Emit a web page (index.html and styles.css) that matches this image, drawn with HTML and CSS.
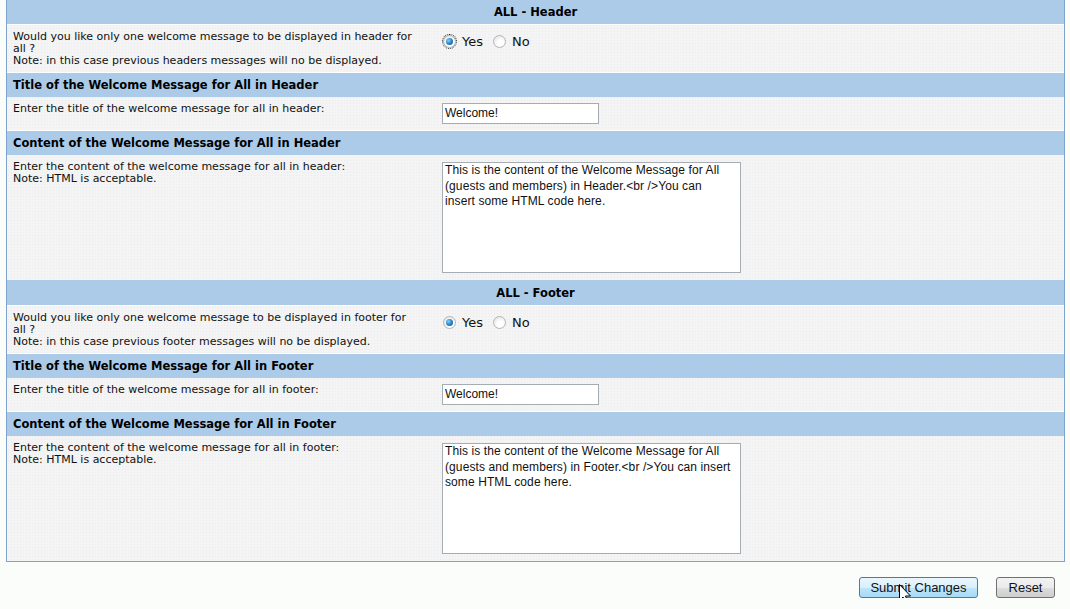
FILE: index.html
```html
<!DOCTYPE html>
<html lang="en">
<head>
    <meta charset="UTF-8">
    <title>Welcome Messages</title>
    <link rel="stylesheet" href="styles.css">
</head>
<body>
    <form class="panel">
        <div class="cat first">ALL - Header</div>
        <div class="row">
            <div class="label">Would you like only one welcome message to be displayed in header for all ?<br>Note: in this case previous headers messages will no be displayed.</div>
            <div class="field">
                <span class="radio checked focus"></span><span class="opt">Yes</span>
                <span class="radio"></span><span class="opt">No</span>
            </div>
        </div>
        <div class="title">Title of the Welcome Message for All in Header</div>
        <div class="row">
            <div class="label">Enter the title of the welcome message for all in header:</div>
            <div class="field"><div class="input">Welcome!</div></div>
        </div>
        <div class="title">Content of the Welcome Message for All in Header</div>
        <div class="row tall">
            <div class="label">Enter the content of the welcome message for all in header:<br>Note: HTML is acceptable.</div>
            <div class="field"><div class="textarea">This is the content of the Welcome Message for All<br>(guests and members) in Header.&lt;br /&gt;You can<br>insert some HTML code here.</div></div>
        </div>

        <div class="cat">ALL - Footer</div>
        <div class="row">
            <div class="label">Would you like only one welcome message to be displayed in footer for all ?<br>Note: in this case previous footer messages will no be displayed.</div>
            <div class="field">
                <span class="radio checked"></span><span class="opt">Yes</span>
                <span class="radio"></span><span class="opt">No</span>
            </div>
        </div>
        <div class="title">Title of the Welcome Message for All in Footer</div>
        <div class="row">
            <div class="label">Enter the title of the welcome message for all in footer:</div>
            <div class="field"><div class="input">Welcome!</div></div>
        </div>
        <div class="title">Content of the Welcome Message for All in Footer</div>
        <div class="row tall">
            <div class="label">Enter the content of the welcome message for all in footer:<br>Note: HTML is acceptable.</div>
            <div class="field"><div class="textarea">This is the content of the Welcome Message for All<br>(guests and members) in Footer.&lt;br /&gt;You can insert<br>some HTML code here.</div></div>
        </div>
    </form>
    <div class="buttons">
        <span class="btn submit">Submit Changes
            <svg class="cursor" width="14" height="24" viewBox="0 0 14 24"><path d="M1.5 1.5 L1.5 17.5 L5 14 L8 21.5 L10.5 20.5 L7.5 13 L12.5 13 Z" fill="#fff" stroke="#000" stroke-width="1" stroke-linejoin="miter"/></svg>
        </span>
        <span class="btn reset">Reset</span>
    </div>
</body>
</html>
```

FILE: styles.css
```css
body {
    margin: 0;
    background: #fbfdfb;
    font-family: "DejaVu Sans", Verdana, sans-serif;
    font-size: 11px;
    color: #111;
}

.panel {
    margin: 0 5px 0 6px;
    border: 1px solid #7fa3cc;
    border-top: none;
    background-color: #f3f4f3;
    background-image: radial-gradient(#e9ebee 0.5px, transparent 0.7px);
    background-size: 3px 3px;
}

.cat {
    background: #abcbe8;
    text-align: center;
    font-weight: bold;
    font-size: 11.5px;
    color: #000;
    height: 25px;
    line-height: 27px;
    border-bottom: 1px solid #fff;
}

.cat.first {
    height: 24px;
    line-height: 25px;
}

.title {
    background: #abcbe8;
    font-weight: bold;
    font-size: 11.5px;
    color: #000;
    line-height: 15px;
    padding: 5px 6px 4px;
    border-top: 1px solid #fff;
}

.row {
    display: grid;
    grid-template-columns: 429px 1fr;
    line-height: 12px;
}

.row .label {
    padding: 6px 16px 5px 6px;
}

.row .field {
    padding: 6px;
}

.cat + .row .field {
    display: flex;
    align-items: center;
    align-self: start;
    padding-top: 10px;
    font-size: 13px;
}

.radio {
    box-sizing: border-box;
    width: 13px;
    height: 13px;
    border-radius: 50%;
    border: 1px solid #b3b6b9;
    background: radial-gradient(circle at 60% 65%, #fff 30%, #dcdcd8 100%);
    margin: 0 6px 0 1px;
    position: relative;
}

.radio.checked::after {
    content: "";
    position: absolute;
    left: 2px;
    top: 2px;
    width: 7px;
    height: 7px;
    border-radius: 50%;
    background: radial-gradient(circle at 35% 35%, #7fd0f5 0%, #1d78c0 60%, #0c4f8c 100%);
}

.radio.focus {
    outline: 1px dotted #222;
    outline-offset: 0;
}

.opt {
    margin-right: 9px;
    color: #111;
}

.input,
.textarea {
    box-sizing: border-box;
    background: #fff;
    border: 1px solid #a5acb2;
    font-family: "Liberation Sans", Arial, sans-serif;
    font-size: 12px;
    color: #111;
}

.input {
    width: 157px;
    height: 21px;
    line-height: 19px;
    padding: 0 2px;
}

.textarea {
    width: 299px;
    height: 111px;
    line-height: 15.5px;
    padding: 0 2px;
    letter-spacing: 0.1px;
    white-space: nowrap;
}

.tall .field {
    padding-top: 7px;
    padding-bottom: 7px;
}

.buttons {
    display: flex;
    justify-content: flex-end;
    gap: 18px;
    padding: 15px 15px 0 0;
}

.btn {
    box-sizing: border-box;
    height: 21px;
    line-height: 19px;
    text-align: center;
    font-family: "Liberation Sans", Arial, sans-serif;
    font-size: 13px;
    color: #111;
    border-radius: 3px;
    position: relative;
}

.submit {
    width: 119px;
    border: 1px solid #3c7fb1;
    background: linear-gradient(#eaf6fd, #d9f0fc 50%, #bee6fd 51%, #a7d9f5);
}

.reset {
    width: 59px;
    border: 1px solid #707070;
    background: linear-gradient(#f2f2f2, #ebebeb 50%, #dddddd 51%, #cfcfcf);
}

.cursor {
    position: absolute;
    left: 38px;
    top: 5px;
}
```
